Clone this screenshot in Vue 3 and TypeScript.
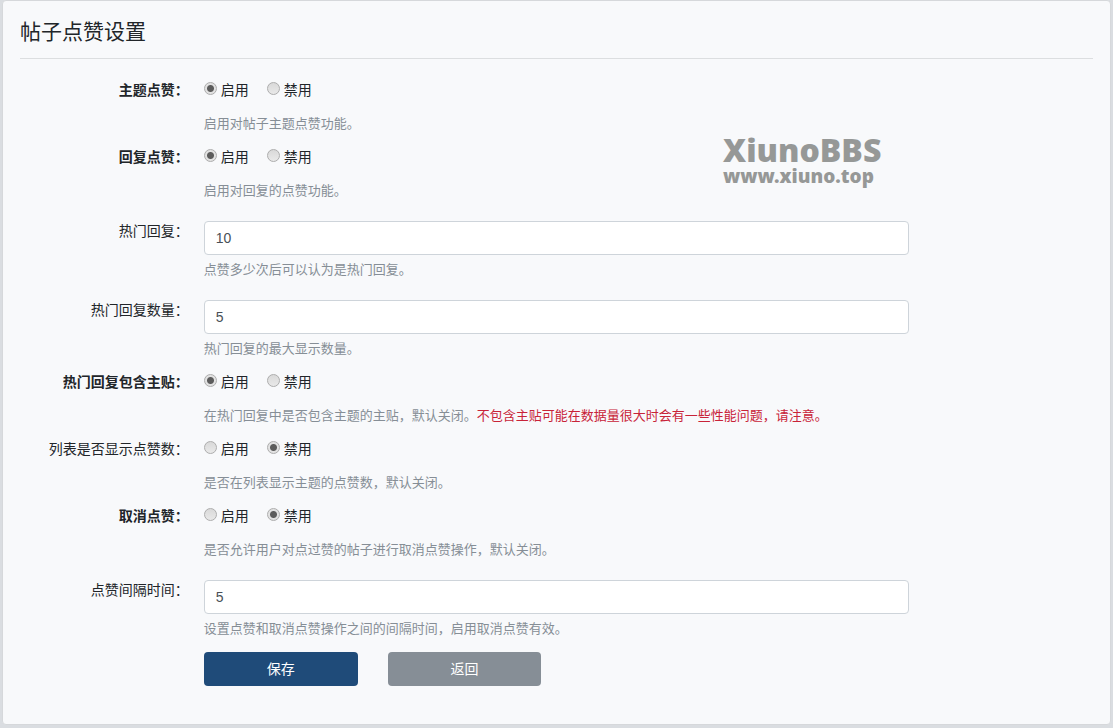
<script setup lang="ts">
import { reactive } from 'vue'

interface RadioField {
  kind: 'radio'
  name: string
  label: string
  strong: boolean
  hint: string
  warning?: string
}

interface TextField {
  kind: 'text'
  name: string
  label: string
  hint: string
}

const fields: (RadioField | TextField)[] = [
  { kind: 'radio', name: 'thread', label: '主题点赞：', strong: true, hint: '启用对帖子主题点赞功能。' },
  { kind: 'radio', name: 'reply', label: '回复点赞：', strong: true, hint: '启用对回复的点赞功能。' },
  { kind: 'text', name: 'hot', label: '热门回复：', hint: '点赞多少次后可以认为是热门回复。' },
  { kind: 'text', name: 'hotCount', label: '热门回复数量：', hint: '热门回复的最大显示数量。' },
  {
    kind: 'radio',
    name: 'hotFirst',
    label: '热门回复包含主贴：',
    strong: true,
    hint: '在热门回复中是否包含主题的主贴，默认关闭。',
    warning: '不包含主贴可能在数据量很大时会有一些性能问题，请注意。',
  },
  { kind: 'radio', name: 'list', label: '列表是否显示点赞数：', strong: false, hint: '是否在列表显示主题的点赞数，默认关闭。' },
  { kind: 'radio', name: 'cancel', label: '取消点赞：', strong: true, hint: '是否允许用户对点过赞的帖子进行取消点赞操作，默认关闭。' },
  { kind: 'text', name: 'interval', label: '点赞间隔时间：', hint: '设置点赞和取消点赞操作之间的间隔时间，启用取消点赞有效。' },
]

const options = [
  { value: '1', text: '启用' },
  { value: '0', text: '禁用' },
]

const values = reactive<Record<string, string>>({
  thread: '1',
  reply: '1',
  hot: '10',
  hotCount: '5',
  hotFirst: '1',
  list: '0',
  cancel: '0',
  interval: '5',
})
</script>

<template>
  <main class="card">
    <h1 class="title">帖子点赞设置</h1>
    <form class="form" @submit.prevent>
      <template v-for="field in fields" :key="field.name">
        <div
          v-if="field.kind === 'radio'"
          class="row"
          role="radiogroup"
          :aria-labelledby="`${field.name}-label`"
        >
          <span :id="`${field.name}-label`" class="label" :class="{ strong: field.strong }">{{ field.label }}</span>
          <div class="field">
            <div class="options">
              <label v-for="option in options" :key="option.value" class="option">
                <input v-model="values[field.name]" type="radio" class="radio" :name="field.name" :value="option.value" />
                {{ option.text }}
              </label>
            </div>
            <p class="hint">{{ field.hint }}<span v-if="field.warning" class="warning">{{ field.warning }}</span></p>
          </div>
        </div>
        <div v-else class="row text-row">
          <label class="label" :for="field.name">{{ field.label }}</label>
          <div class="field">
            <input :id="field.name" v-model="values[field.name]" type="text" class="input" />
            <p class="hint">{{ field.hint }}</p>
          </div>
        </div>
      </template>
      <div class="row">
        <div class="actions">
          <button type="submit" class="button primary">保存</button>
          <button type="button" class="button secondary">返回</button>
        </div>
      </div>
    </form>
    <div class="brand">
      <strong class="brand-name">XiunoBBS</strong>
      <span class="brand-site">www.xiuno.top</span>
    </div>
  </main>
</template>

<style>
body {
  background: #dadde1;
}
</style>

<style scoped>
.card {
  position: relative;
  box-sizing: border-box;
  margin: 0 2px 2px;
  padding: 17px 17px 38px;
  border: 1px solid #d6d8db;
  border-radius: 4px;
  background: #f8f9fb;
  color: #212529;
  font-family: "Liberation Sans", "Noto Sans CJK SC", sans-serif;
  font-size: 14px;
  line-height: 21px;
}

.title {
  margin: 0 0 21px;
  padding-bottom: 13px;
  border-bottom: 1px solid #dcdee0;
  font-size: 21px;
  font-weight: 400;
  line-height: 27px;
}

.form {
  margin: 0 -15px;
}

.row {
  display: grid;
  grid-template-columns: 2fr 8fr 2fr;
  margin-bottom: 13px;
}

.row:last-child {
  margin-bottom: 0;
}

.text-row {
  padding-top: 7px;
}

.label {
  text-align: right;
}

.strong {
  font-weight: 700;
}

.field {
  padding: 0 15px;
}

.options {
  display: flex;
  gap: 18px;
  margin-bottom: 12px;
}

.option {
  display: flex;
  gap: 4px;
}

.radio {
  appearance: none;
  box-sizing: border-box;
  width: 13px;
  height: 13px;
  margin: 2px 0 0;
  border: 1px solid #adadad;
  border-radius: 50%;
  background: linear-gradient(#d9d9d9, #e9e9e9);
}

.radio:checked {
  background: radial-gradient(circle, #5c5c5c 3px, #e2e2e2 4px);
}

.input {
  display: block;
  box-sizing: border-box;
  width: 100%;
  height: 34px;
  margin: 0 0 4px;
  padding: 0 11px;
  border: 1px solid #ced4da;
  border-radius: 4px;
  background: #fff;
  color: #495057;
  font: inherit;
}

.hint {
  margin: 0;
  color: #868e96;
  font-size: 13px;
}

.warning {
  color: #c82338;
}

.actions {
  display: grid;
  grid-template-columns: repeat(4, 1fr);
  grid-column: 2;
}

.button {
  height: 34px;
  margin: 0 15px;
  padding: 0;
  border: 0;
  border-radius: 4px;
  color: #fff;
  font: inherit;
}

.primary {
  background: #1f4b79;
}

.secondary {
  background: #868e96;
}

.brand {
  position: absolute;
  top: 131px;
  left: 720px;
  display: flex;
  flex-direction: column;
  color: #969897;
  font-family: "Noto Sans", sans-serif;
  font-weight: 900;
}

.brand-name {
  font-size: 32px;
  font-weight: 900;
  line-height: 36px;
}

.brand-site {
  font-size: 19px;
  line-height: 16px;
}
</style>
